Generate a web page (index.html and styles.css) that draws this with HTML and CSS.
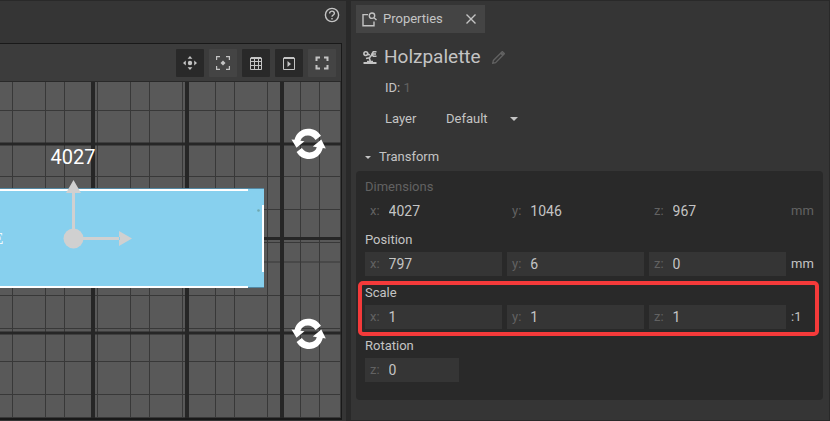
FILE: index.html
```html
<!DOCTYPE html>
<html lang="en">
<head>
<meta charset="utf-8">
<title>Layout editor</title>
<link rel="stylesheet" href="styles.css">
</head>
<body>
<main class="editor">
  <section class="scene">
    <header class="scene-head">
      <button class="help" aria-label="Help">
        <svg width="16" height="16" viewBox="0 0 16 16" fill="none" stroke="currentColor" stroke-width="1.4"><circle cx="8" cy="8" r="6.6"/><path d="M5.600 6.500c0-3.200 4.800-3 4.800-.1 0 1.500-2.400 1.700-2.400 3.300M8 10.900v1.500"/></svg>
      </button>
    </header>
    <div class="viewport">
      <div class="toolbar">
        <button class="tool on" aria-label="Move">
          <svg width="14" height="14" viewBox="0 0 14 14" fill="currentColor"><circle cx="7" cy="7" r="2.200"/><path d="M7 0l2.400 2.800H4.600zM7 14l2.400-2.800H4.600zM0 7l2.800-2.400v4.800zM14 7l-2.800-2.400v4.800z"/></svg>
        </button>
        <button class="tool" aria-label="Focus">
          <svg width="14" height="14" viewBox="0 0 14 14" fill="none" stroke="currentColor" stroke-width="1.200"><path d="M.6 4V.6H4M10 .6h3.400V4M13.400 10v3.400H10M4 13.400H.6V10"/><path fill="currentColor" stroke="none" d="M7 4.500L9.500 7 7 9.500 4.500 7z"/></svg>
        </button>
        <button class="tool on" aria-label="Grid">
          <svg width="12" height="13" viewBox="0 0 12 13" fill="none" stroke="currentColor"><path d="M.5 1h11v11.500H.5zM.5 4.500h11M.5 8.500h11M4.500 2v10.500M8.500 2v10.500"/><path stroke-width="2" d="M1 1h10"/></svg>
        </button>
        <button class="tool on" aria-label="Play">
          <svg width="12" height="13" viewBox="0 0 12 13" fill="none" stroke="currentColor"><path d="M.5 1h11v11.500H.5z"/><path stroke-width="2" d="M1 1h10"/><path fill="currentColor" stroke="none" d="M4.500 4v6l3.500-3z"/></svg>
        </button>
        <button class="tool" aria-label="Full screen">
          <svg width="14" height="14" viewBox="0 0 14 14" fill="none" stroke="currentColor" stroke-width="2"><path d="M1.500 5V1.500H5M9 1.500h3.500V5M12.500 9v3.500H9M5 12.500H1.500V9"/></svg>
        </button>
      </div>
      <div class="canvas">
        <svg class="drawing" viewBox="0 82 341 336" preserveAspectRatio="xMinYMin slice">
          <g class="thin">
            <path d="M12.500 82v336M45.500 82v336M64.500 82v336M97.500 82v336M130.500 82v336M149.500 82v336M182.500 82v336M215.500 82v336M234.500 82v336M267.500 82v336M300.500 82v336M319.500 82v336M340.500 82v336"/>
            <path d="M0 110.500h341M0 176.500h341M0 209.500h341M0 242.500h341M0 262h341M0 295.500h341M0 328.500h341M0 361.500h341M0 394.500h341M0 417.500h341"/>
          </g>
          <g class="thick">
            <path d="M93 82v336M187 82v336M282 82v336"/>
            <path class="across" d="M0 144h341M0 238.500h341M0 333h341"/>
          </g>
          <path fill="#5388a3" d="M0 188h264v100H0z"/>
          <path fill="#87d0ee" d="M0 189h264v98H0z"/>
          <path fill="#fff" d="M0 189h248v2H0zM0 286h248v2H0zM262 205h2v67h-2z"/>
          <circle cx="258.500" cy="210.500" r="1.300" fill="#6fa8b0"/>
          <text class="mark" x="-7" y="244">E</text>
          <g fill="#d0d0d0">
            <circle cx="73.500" cy="238.500" r="10"/>
            <path d="M72 192h3v46h-3zM73.500 180l7.500 13H66zM74 237h46v3H74zM119 231v15l13-7.500z"/>
          </g>
          <text class="measure" x="73" y="164">4027</text>
          <g id="turn" fill="#fff">
            <path d="M291.500 139.500l3 .3c2-7 7-11 13.500-11 6 0 10 2.500 13 7l-5.500 4.200c-2-3-4.500-4.500-7.500-4.500-4 0-6.500 2-7.500 5.200l4 .6-8 6.500z"/>
            <path d="M325.800 148.500l-3-.4c-2 7-7 11-13.500 11-6 0-10-2.500-12.700-7l5.200-4c2 2.800 4.500 4.300 7.500 4.300 4 0 6.500-2 7.500-5.200l-4-.7 8.500-7z"/>
          </g>
          <use href="#turn" y="190"/>
        </svg>
      </div>
    </div>
  </section>

  <aside class="properties">
    <div class="tab">
      <svg width="15" height="15" viewBox="0 0 15 15" fill="none" stroke="currentColor" stroke-width="1.400"><path d="M6 2.600H1v11.200h11V9.500"/><circle cx="10" cy="3.700" r="2.700"/><path d="M12 5.700l2.500 2.300"/></svg>
      <span class="tab-name">Properties</span>
      <button class="close" aria-label="Close">
        <svg width="10" height="10" viewBox="0 0 10 10" fill="none" stroke="currentColor" stroke-width="1.400"><path d="M.5.5l9 9M9.500.5l-9 9"/></svg>
      </button>
    </div>
    <div class="object">
      <svg width="14" height="14" viewBox="0 0 14 14" fill="none" stroke="currentColor" stroke-width="1.600"><circle cx="2.800" cy="3.600" r="1.900"/><path stroke-width="2" d="M.5 13h13"/><path d="M4 11.500h6M7.500 12L6.300 8l3-3.800M4.500 4l2.300 1M3 8.500l3.500-.8M13.500 1.800H10.300L8.800 4.200l1.500 2h3.200M9 4h4"/></svg>
      <h1 class="object-name">Holzpalette</h1>
      <button class="edit" aria-label="Rename">
        <svg width="13" height="13" viewBox="0 0 12 12" fill="none" stroke="currentColor" stroke-width="1.200"><path d="M.7 11.300l.6-2.600L8 2l2 2-6.700 6.700zM8.500 1.500l1-1 2 2-1 1z"/></svg>
      </button>
    </div>
    <p class="detail">ID: <span class="dim">1</span></p>
    <div class="detail">
      <label class="layer-label" for="layer">Layer</label>
      <span class="picker"><select id="layer"><option>Default</option></select><svg width="8" height="4" viewBox="0 0 8 4"><path fill="currentColor" d="M0 0h8L4 4z"/></svg></span>
    </div>
    <button class="section"><svg width="6" height="3" viewBox="0 0 6 3"><path fill="currentColor" d="M0 0h6L3 3z"/></svg>Transform</button>
    <div class="panel">
      <fieldset class="group fixed">
        <legend>Dimensions</legend>
        <div class="row">
          <label class="field">x:<input value="4027" readonly></label>
          <label class="field">y:<input value="1046" readonly></label>
          <label class="field">z:<input value="967" readonly></label>
          <span class="unit">mm</span>
        </div>
      </fieldset>
      <fieldset class="group">
        <legend>Position</legend>
        <div class="row">
          <label class="field">x:<input value="797"></label>
          <label class="field">y:<input value="6"></label>
          <label class="field">z:<input value="0"></label>
          <span class="unit">mm</span>
        </div>
      </fieldset>
      <fieldset class="group marked">
        <legend>Scale</legend>
        <div class="row">
          <label class="field">x:<input value="1"></label>
          <label class="field">y:<input value="1"></label>
          <label class="field">z:<input value="1"></label>
          <span class="unit">:1</span>
        </div>
      </fieldset>
      <fieldset class="group">
        <legend>Rotation</legend>
        <div class="row single">
          <label class="field">z:<input value="0"></label>
        </div>
      </fieldset>
    </div>
  </aside>
</main>
</body>
</html>
```
FILE: styles.css
```css
* { box-sizing: border-box; }

body {
  margin: 0;
  background: #353535;
  color: #c4c4c4;
  font: 13px/24px Roboto, sans-serif;
}

button, input, select {
  margin: 0;
  padding: 0;
  border: 0;
  background: none;
  color: inherit;
  font: inherit;
}

svg { display: block; flex: none; }

.editor {
  display: grid;
  grid-template-columns: 346fr 484fr;
  min-height: 100vh;
  border-top: 1px solid #292929;
}

.scene { display: flex; flex-direction: column; min-width: 0; }

.scene-head {
  display: flex;
  justify-content: flex-end;
  height: 42px;
  padding: 6px 6px 0 0;
}

.help { height: 16px; }

.viewport {
  flex: 1;
  display: flex;
  flex-direction: column;
  margin: 0 4px 1px 0;
  border: solid #191919;
  border-width: 1px 1px 2px 0;
  background: #3c3c3c;
}

.toolbar {
  display: flex;
  justify-content: flex-end;
  gap: 5px;
  height: 38px;
  padding: 5px 5px 0 0;
  border-bottom: 1px solid #292929;
}

.tool {
  display: grid;
  place-items: center;
  width: 28px;
  height: 28px;
  border-radius: 1px;
  background: #444;
}

.tool.on { background: #292929; }

.canvas { position: relative; flex: 1; overflow: hidden; background: #595959; }

.drawing { position: absolute; inset: 0; width: 100%; height: 100%; }

.thin { stroke: #383838; stroke-width: 1; }
.thick { stroke: #262626; stroke-width: 4; }
.across { stroke-width: 3; }
.measure { fill: #fff; font-size: 20px; text-anchor: middle; }
.mark { fill: #fff; font: 17px "Liberation Serif", serif; }

.properties {
  border: solid #292929;
  border-width: 0 1px 1px 5px;
  padding: 4px 6px 4px 5px;
}

.tab {
  display: flex;
  align-items: center;
  width: 129px;
  height: 28px;
  padding: 0 9px 0 6px;
  background: #444;
}

.tab-name { margin-left: 6px; }
.close { margin-left: auto; }

.object {
  display: flex;
  align-items: center;
  height: 36px;
  margin-top: 6px;
  padding-left: 7px;
}

.object-name { margin: 0 11px 0 7px; font-size: 19px; font-weight: 400; }

.edit, .dim { color: #626262; }

.detail {
  display: flex;
  align-items: center;
  height: 31px;
  margin: 0;
  padding-left: 29px;
  white-space: pre;
}

.object + .detail { margin-top: -3px; }

.layer-label { width: 61px; }

.picker { display: flex; align-items: center; }
.picker select { width: 64px; appearance: none; }

.section {
  display: flex;
  align-items: center;
  gap: 8px;
  height: 28px;
  margin-top: 9px;
  padding-left: 9px;
}

.panel {
  display: flex;
  flex-direction: column;
  gap: 5px;
  padding: 4px 8px 18px 9px;
  border-radius: 4px;
  background: #292929;
}

.group { position: relative; min-width: 0; margin: 0; padding: 0; border: 0; }
.group legend { padding: 0; }

.row {
  position: relative;
  display: grid;
  grid-template-columns: 1fr 1fr 1fr 24px;
  gap: 5px;
}

.row.single { grid-template-columns: 94px; }

.field {
  display: flex;
  padding-left: 5px;
  background: #353535;
  color: #626262;
}

.field input {
  width: 0;
  flex: 1;
  margin-left: 9px;
  color: #c4c4c4;
  font-size: 14px;
}

.fixed legend, .fixed .unit { color: #626262; }
.fixed .field { background: none; }

.marked .row::after {
  content: "";
  position: absolute;
  inset: -24px -4px -7px -7px;
  border: 4px solid #f43a3a;
  border-radius: 5px;
  pointer-events: none;
}
```
